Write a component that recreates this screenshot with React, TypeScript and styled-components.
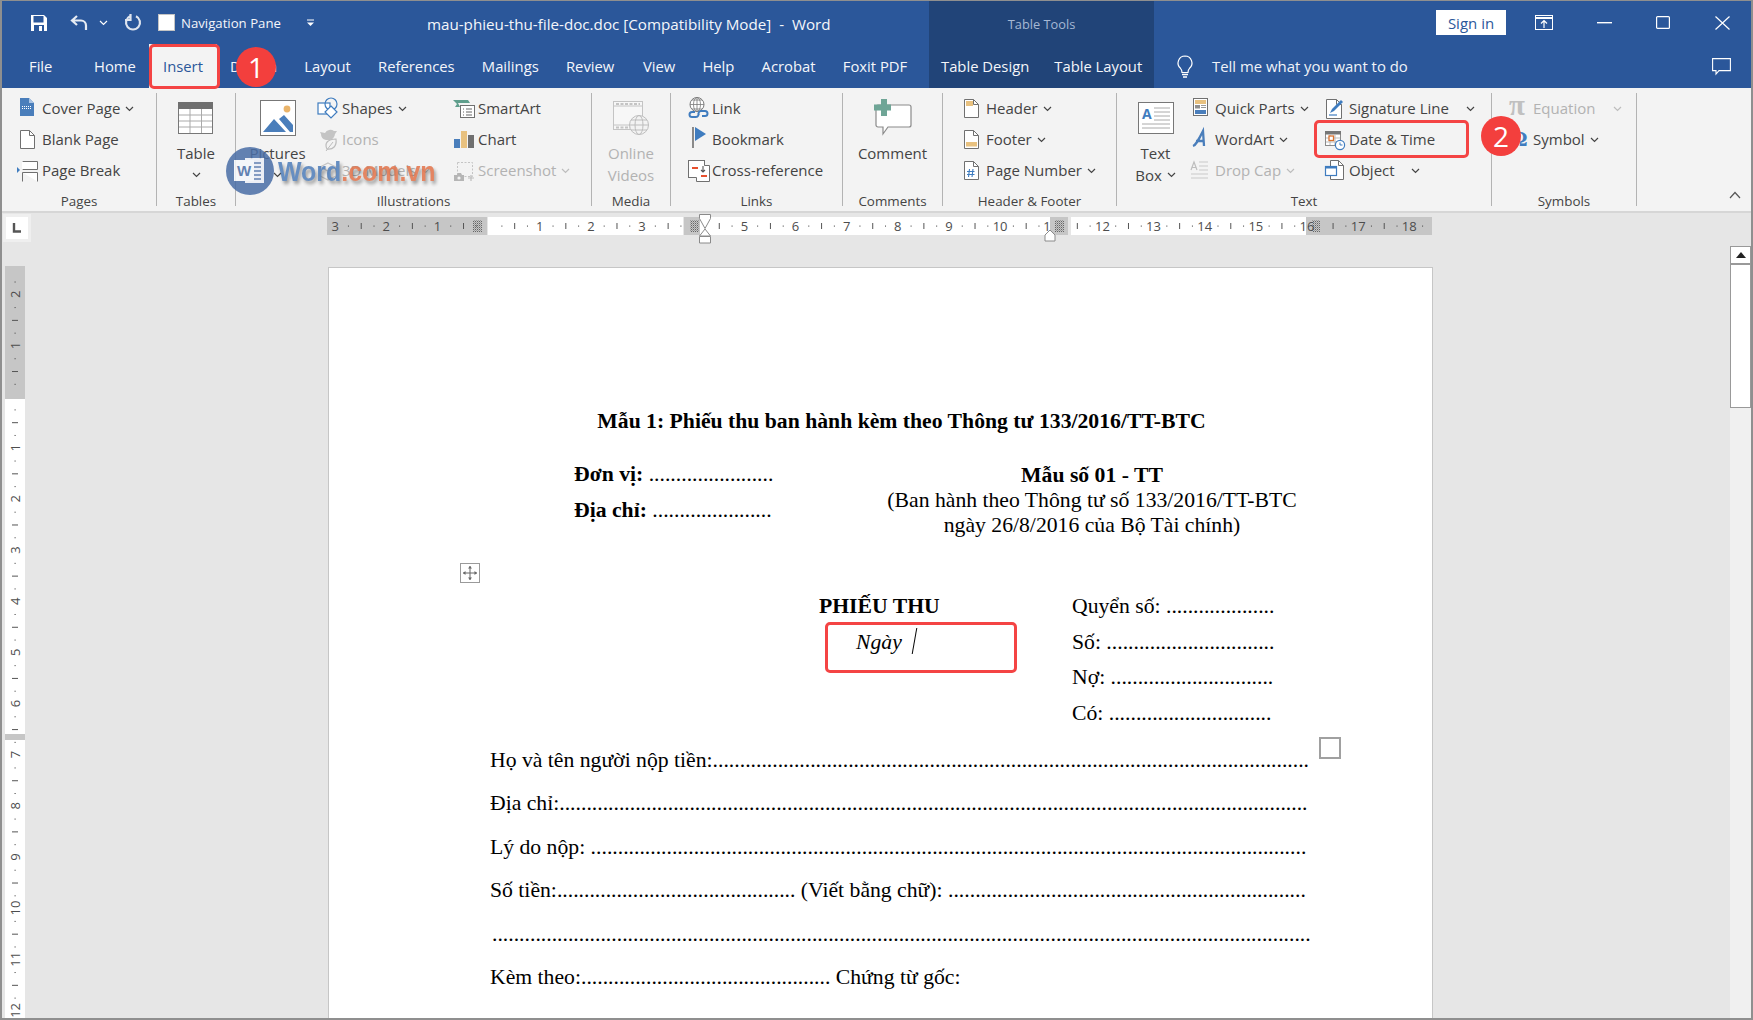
import React from 'react'
import styled, { createGlobalStyle } from 'styled-components'

const GlobalStyle = createGlobalStyle`
  html, body { margin: 0; padding: 0; background: #e6e6e6; }
  body { font-family: "Open Sans", "Noto Sans", sans-serif; }
`

const Window = styled.div`
  position: relative;
  box-sizing: border-box;
  width: 1753px;
  height: 1020px;
  display: flex;
  flex-direction: column;
  overflow: hidden;
  background: #e6e6e6;
  border: solid #8f8f8f;
  border-width: 1px 2px 2px 2px;
`

/* ---------- title bar + tabs ---------- */

const Head = styled.header`
  display: flex;
  height: 87px;
  flex-shrink: 0;
  background: #2b579a;
  color: #f4f6fa;
`

const HeadBlock = styled.div<{ $w?: number; $dark?: boolean }>`
  display: flex;
  flex-direction: column;
  width: ${p => (p.$w ? `${p.$w}px` : 'auto')};
  flex: ${p => (p.$w ? '0 0 auto' : '1')};
  background: ${p => (p.$dark ? '#214478' : 'transparent')};
`

const TopRow = styled.div`
  display: flex;
  align-items: center;
  height: 43px;
`

const TabRow = styled.nav`
  display: flex;
  align-items: center;
  height: 44px;
`

const Spot = styled.span<{ $ml: number }>`
  display: inline-flex;
  align-items: center;
  flex-shrink: 0;
  margin-left: ${p => p.$ml}px;
`

const RightSpot = styled.span`
  display: inline-flex;
  margin: 0 20px 0 auto;
`

const RulerSlot = styled.div`
  margin: 24px 0 0 3px;
`

const NavCheck = styled.span<{ $ml: number }>`
  width: 15px;
  height: 15px;
  margin-left: ${p => p.$ml}px;
  background: #fff;
  box-shadow: 0 0 0 1px #c4c4c4;
  flex-shrink: 0;
`

const NavLabel = styled.span<{ $ml: number }>`
  margin-left: ${p => p.$ml}px;
  font-size: 13.2px;
  white-space: nowrap;
  padding-top: 1px;
`

const DocTitle = styled.span<{ $ml: number }>`
  margin-left: ${p => p.$ml}px;
  font-size: 15.2px;
  white-space: pre;
  padding-top: 2px;
`

const ContextTitle = styled.span`
  width: 100%;
  text-align: center;
  padding-top: 2px;
  font-size: 12.8px;
  color: #a6b8d4;
`

const Tab = styled.span<{ $active?: boolean; $pl?: number; $pr?: number }>`
  display: flex;
  align-items: center;
  height: 100%;
  padding: 0 ${p => p.$pr ?? 13.6}px 0 ${p => p.$pl ?? 13.6}px;
  font-size: 14.8px;
  white-space: nowrap;
  background: ${p => (p.$active ? '#f3f3f3' : 'transparent')};
  color: ${p => (p.$active ? '#2b579a' : 'inherit')};
`

const TellMe = styled.span`
  margin-left: 19px;
  font-size: 14.9px;
  color: #f0f3f8;
  white-space: nowrap;
`

const SignIn = styled.span`
  width: 70px;
  height: 25px;
  margin-left: 282px;
  display: flex;
  align-items: center;
  justify-content: center;
  background: #fff;
  color: #2b579a;
  font-size: 15px;
  flex-shrink: 0;
`

/* ---------- ribbon ---------- */

const Ribbon = styled.div`
  display: flex;
  flex-shrink: 0;
  height: 118px;
  padding-top: 5px;
  box-sizing: content-box;
  background: #f3f3f3;
  border-bottom: 2px solid #d6d6d6;
  color: #444;
  font-size: 15px;
`

const Group = styled.section<{ $w: number }>`
  width: ${p => p.$w}px;
  flex-shrink: 0;
  height: 113px;
  box-sizing: border-box;
  border-right: 1px solid #b3b3b3;
`

const GroupBody = styled.div<{ $pl?: number }>`
  display: flex;
  height: 93px;
  padding-left: ${p => p.$pl ?? 0}px;
`

const GroupLabel = styled.div`
  height: 20px;
  margin-top: 5px;
  line-height: 20px;
  text-align: center;
  font-size: 13.4px;
  white-space: nowrap;
`

const SmallColumn = styled.div<{ $w?: number }>`
  display: flex;
  flex-direction: column;
  width: ${p => (p.$w ? `${p.$w}px` : 'auto')};
  flex-shrink: 0;
`

const SmallRow = styled.div<{ $off?: boolean }>`
  display: flex;
  align-items: center;
  height: 31px;
  white-space: nowrap;
  color: ${p => (p.$off ? '#b2b2b2' : '#444')};
`

const SmallText = styled.span`
  margin-left: 1px;
  padding-bottom: 2px;
`

const Large = styled.div<{ $w: number; $off?: boolean }>`
  display: flex;
  flex-direction: column;
  align-items: center;
  width: ${p => p.$w}px;
  flex-shrink: 0;
  color: ${p => (p.$off ? '#b2b2b2' : '#444')};
`

const LargeIcon = styled.div`
  display: flex;
  align-items: center;
  justify-content: center;
  height: 49px;
`

const LargeLine = styled.div`
  display: flex;
  align-items: center;
  height: 22px;
  white-space: nowrap;
`

const CollapseSpot = styled.span`
  margin: 0 10px 12px auto;
  align-self: flex-end;
`

/* ---------- work area ---------- */

const Work = styled.main`
  flex: 1;
  min-height: 0;
  display: flex;
`

const Rail = styled.div`
  width: 30px;
  flex-shrink: 0;
  display: flex;
  flex-direction: column;
`

const Corner = styled.div`
  width: 22px;
  height: 22px;
  margin: 1px 0 0 1px;
  border: 3px solid #efefef;
  background: #fff;
  display: flex;
  align-items: center;
  justify-content: center;
  flex-shrink: 0;
`

const Center = styled.div`
  flex: 1;
  min-width: 0;
  display: flex;
  flex-direction: column;
  overflow: hidden;
`

const Page = styled.article`
  margin: 23px 0 0 296px;
  width: 1105px;
  flex: 1;
  box-sizing: border-box;
  border: solid #c6c6c6;
  border-width: 1px 1px 0 1px;
  background: #fff;
  padding: 140px 0 0 161px;
  color: #000;
  font-family: "Liberation Serif", "Times New Roman", serif;
  font-size: 21.7px;
`

const Sheet = styled.div`
  position: relative;
  width: 819px;
`

const PageTitle = styled.h1`
  margin: 0;
  padding-left: 4px;
  font-size: 21.7px;
  line-height: 26px;
  font-weight: 700;
  text-align: center;
`

const Intro = styled.div`
  display: grid;
  grid-template-columns: 385px 434px;
  margin-top: 29px;
`

const IntroLeft = styled.div`
  padding-left: 84px;
  line-height: 35.6px;
  margin-top: -6px;
`

const IntroRight = styled.div`
  text-align: center;
  line-height: 25px;
`

const Strong = styled.b`
  font-weight: 700;
`

const Receipt = styled.div`
  display: grid;
  grid-template-columns: 329px 253px 237px;
  margin-top: 51px;
  line-height: 35.7px;
`

const ReceiptDate = styled.div`
  padding-left: 37px;
  font-style: italic;
`

const Caret = styled.span`
  display: inline-block;
  width: 1px;
  height: 26px;
  margin-left: 12px;
  background: #000;
  transform: skewX(-10deg);
  vertical-align: -5px;
`

const Form = styled.div`
  margin-top: 7px;
`

const FormRow = styled.div<{ $pl?: number }>`
  height: 43.5px;
  line-height: 43.5px;
  padding-left: ${p => p.$pl ?? 0}px;
  white-space: nowrap;
`

const MoveHandle = styled.span`
  position: absolute;
  left: -30px;
  top: 155px;
  width: 18px;
  height: 18px;
  border: 1px solid #9a9a9a;
  background: #fff;
  display: flex;
  align-items: center;
  justify-content: center;
`

const FloatBox = styled.span`
  position: absolute;
  left: 829px;
  top: 329px;
  width: 18px;
  height: 18px;
  border: 2px solid #a0a0a0;
`

const ScrollColumn = styled.div`
  width: 21px;
  flex-shrink: 0;
  display: flex;
  flex-direction: column;
  padding-top: 33px;
`

const ScrollUp = styled.div`
  height: 16px;
  border: 1px solid #999;
  border-bottom: 2px solid #999;
  background: #fff;
  display: flex;
  align-items: center;
  justify-content: center;
  flex-shrink: 0;
`

const ScrollThumb = styled.div`
  height: 142px;
  border: 1px solid #999;
  border-top: 0;
  background: #fff;
  flex-shrink: 0;
`

const ScrollTrack = styled.div`
  flex: 1;
  background: #f0f0f0;
`

/* ---------- overlays ---------- */

const RedBox = styled.span<{ $x: number; $y: number; $w: number; $h: number }>`
  position: absolute;
  left: ${p => p.$x}px;
  top: ${p => p.$y}px;
  width: ${p => p.$w}px;
  height: ${p => p.$h}px;
  box-sizing: border-box;
  border: 3px solid #f44444;
  border-radius: 5px;
`

const Badge = styled.span<{ $x: number; $y: number }>`
  position: absolute;
  left: ${p => p.$x - 20}px;
  top: ${p => p.$y - 20}px;
  width: 40px;
  height: 40px;
  border-radius: 50%;
  background: #f33f3d;
  color: #fff;
  display: flex;
  align-items: center;
  justify-content: center;
  font-family: "Open Sans", sans-serif;
  font-size: 28px;
`

const Watermark = styled.div`
  position: absolute;
  left: 222px;
  top: 144px;
  display: flex;
  align-items: center;
  opacity: 0.86;
  pointer-events: none;
`

const WatermarkText = styled.span`
  margin-left: 2px;
  font-family: "Liberation Sans", Arial, sans-serif;
  font-weight: 700;
  font-size: 28.5px;
  color: #4f7db9;
  transform: scaleX(0.875);
  transform-origin: left center;
  text-shadow: 2px 3px 4px rgba(0, 0, 0, 0.45);
`

const WatermarkAccent = styled.span`
  color: #e1734a;
`

/* ---------- icons ---------- */

const Ico = styled.svg`
  display: block;
  flex-shrink: 0;
  overflow: visible;
`

const I = ({ w = 24, h = 24, children }: { w?: number; h?: number; children: React.ReactNode }) => (
  <Ico width={w} height={h} viewBox={`0 0 ${w} ${h}`}>{children}</Ico>
)

const Chevron = ({ gap = 5, color = '#444' }: { gap?: number; color?: string }) => (
  <Spot $ml={gap}>
    <Ico width="9" height="6" viewBox="0 0 9 6">
      <path d="M1 1l3.5 3.5L8 1" fill="none" stroke={color} strokeWidth="1.2" />
    </Ico>
  </Spot>
)

const DocPath = ({ x = 3, y = 2, w = 14, h = 18, fill = '#fff', stroke = '#707070' }) => (
  <g fill={fill} stroke={stroke}>
    <path d={`M${x + 0.5} ${y + 0.5}h${w - 5}l5 5v${h - 5}h-${w}z`} />
    <path d={`M${x + w - 4.5} ${y + 0.5}v5h5`} fill="none" />
  </g>
)

const CoverIcon = () => (
  <I>
    <path d="M3 1h9l5 5v13H3z" fill="#4a7ebb" />
    <path d="M12 1v5h5z" fill="#a9c4e4" />
    <path d="M5 9.5h10M5 11.5h10" stroke="#fff" strokeDasharray="1 1" />
  </I>
)
const BlankIcon = () => <I><DocPath /></I>
const BreakIcon = () => (
  <I>
    <path d="M5.5 2.5h15v8h-15zM5.5 13.5h15v9M5.5 13.5v9" fill="#fff" stroke="#707070" />
    <path d="M5.5 2.5v8" stroke="#fff" />
    <path d="M0 8l3 3-3 3z" fill="#3f7cbf" />
  </I>
)
const ShapesIcon = () => (
  <I>
    <rect x="1" y="6" width="12" height="11" fill="#fff" stroke="#3f7cbf" strokeWidth="1.2" />
    <circle cx="14" cy="7" r="6" fill="none" stroke="#3f7cbf" strokeWidth="1.2" />
    <path d="M14 9l6 6-6 6-6-6z" fill="#fff" stroke="#3f7cbf" strokeWidth="1.2" />
  </I>
)
const SmartArtIcon = () => (
  <I>
    <path d="M0 3h15l2 3H5l2 4H2l2-3z" fill="#5f9e8c" />
    <rect x="7.5" y="8.5" width="14" height="12" fill="#fff" stroke="#707070" />
    <path d="M10 12h1M13 12h6M10 15h1M13 15h6M10 18h1M13 18h6" stroke="#666" />
  </I>
)
const LeafIcon = () => (
  <I>
    <path d="M3 4l5 1a6 6 0 0 1 9-2l3 0-2 3a7 7 0 0 1-5 6H9a6 6 0 0 1-5-6z" fill="#c4c4c4" />
    <path d="M10 21c-3-6 1-10 9-10 1 7-3 11-9 10z" fill="#f3f3f3" stroke="#bdbdbd" strokeWidth="1.2" />
    <path d="M9 23l7-9" stroke="#bdbdbd" />
  </I>
)
const ChartIcon = () => (
  <I>
    <rect x="1" y="11" width="6" height="9" fill="#4a7ebb" />
    <rect x="8" y="3" width="6" height="17" fill="#e8c17f" />
    <rect x="15" y="7" width="6" height="13" fill="#6f6f6f" />
  </I>
)
const CubeIcon = () => (
  <I>
    <path d="M11 4l8 4v9l-8 4-8-4V8zM3 8l8 4 8-4M11 12v9" fill="none" stroke="#c4c4c4" strokeWidth="1.2" />
  </I>
)
const ScreenshotIcon = () => (
  <I>
    <rect x="4.5" y="3.5" width="15" height="14" fill="none" stroke="#c4c4c4" strokeDasharray="2 1.5" />
    <path d="M1 16h3l1-2h3l1 2h2v6H1z" fill="#b5b5b5" />
    <circle cx="6" cy="19" r="1.6" fill="#f3f3f3" />
    <path d="M15 19h6M18 16v6" stroke="#bdbdbd" strokeWidth="1.2" />
  </I>
)
const LinkIcon = () => (
  <I>
    <circle cx="10" cy="7.5" r="7" fill="#fff" stroke="#7a7a7a" />
    <path d="M3 7.5h14M10 .5v14M5 3h10M5 12h10" stroke="#7a7a7a" strokeWidth=".8" />
    <ellipse cx="10" cy="7.5" rx="3.5" ry="7" fill="none" stroke="#7a7a7a" strokeWidth=".8" />
    <path d="M8 15h-3a2.5 2.5 0 0 0 0 5h4a2.5 2.5 0 0 0 2-4M12 18h0a2.5 2.5 0 0 1 2-4h4a2.5 2.5 0 0 1 0 5h-3" fill="none" stroke="#3f7cbf" strokeWidth="2" />
  </I>
)
const BookmarkIcon = () => (
  <I>
    <path d="M6 -1v21" stroke="#6f6f6f" strokeWidth="1.6" />
    <path d="M8 -1l11 7-11 7z" fill="#3f7cbf" />
  </I>
)
const CrossRefIcon = () => (
  <I>
    <rect x="1.5" y="1.5" width="16" height="17" fill="#fff" stroke="#707070" />
    <path d="M17.5 6.5h5v16h-13v-4" fill="#fff" stroke="#707070" />
    <path d="M5 9h6" stroke="#e8502e" strokeWidth="2" />
    <path d="M14 17h6" stroke="#e8502e" strokeWidth="2" />
    <path d="M16 7v6m-2-2l2 2 2-2M13 6" fill="none" stroke="#555" strokeWidth="1.1" />
  </I>
)
const HeaderIcon = () => (
  <I>
    <DocPath />
    <rect x="5" y="4" width="7" height="5" fill="#e8c17f" />
  </I>
)
const FooterIcon = () => (
  <I>
    <DocPath />
    <rect x="5" y="14" width="11" height="4.5" fill="#e8c17f" />
  </I>
)
const PageNumberIcon = () => (
  <I>
    <DocPath />
    <path d="M8.5 10l-1 8M12 10l-1 8M6 12.5h7.5M6 15.5h7.5" stroke="#3f7cbf" strokeWidth="1.1" />
  </I>
)
const QuickPartsIcon = () => (
  <I>
    <rect x="3.5" y="1.5" width="14" height="17" fill="#fff" stroke="#707070" />
    <rect x="5" y="3" width="11" height="4" fill="#e8c17f" />
    <rect x="5" y="8" width="5" height="3.5" fill="#8f8f8f" />
    <path d="M11 8.5h5M11 10.5h5" stroke="#999" />
    <rect x="5" y="13" width="11" height="4" fill="#4a7ebb" />
  </I>
)
const WordArtIcon = () => (
  <I>
    <path d="M3 18c3-1 5-5 10-15l1 15M6 13h8" fill="none" stroke="#4a7ebb" strokeWidth="2.3" />
  </I>
)
const DropCapIcon = () => (
  <I>
    <path d="M1 11l3-8 3 8M2 8.5h4" fill="none" stroke="#bdbdbd" strokeWidth="1.2" />
    <path d="M9 3h9M9 7h9M9 11h9M1 15h17M1 19h17" stroke="#c9c9c9" />
  </I>
)
const SignatureIcon = () => (
  <I>
    <DocPath x={2} y={2} w={15} h={19} />
    <path d="M6 16l2-4 9-9 2 2-9 9z" fill="#3f7cbf" />
    <path d="M5 18h8" stroke="#3f7cbf" strokeWidth="1.2" />
  </I>
)
const DateIcon = () => (
  <I>
    <rect x="1.5" y="3.5" width="15" height="14" fill="#fff" stroke="#8a8a8a" />
    <rect x="1" y="3" width="16" height="3.5" fill="#767676" />
    <path d="M6 7v10M11 7v10M2 10h14M2 14h14" stroke="#bbb" />
    <rect x="5" y="8" width="4.5" height="4.5" fill="#fff" stroke="#d9702d" strokeWidth="1.3" />
    <circle cx="16" cy="17" r="4.6" fill="#fff" stroke="#3f7cbf" strokeWidth="1.2" />
    <path d="M16 14.5V17h2.5" fill="none" stroke="#3f7cbf" />
  </I>
)
const ObjectIcon = () => (
  <I>
    <DocPath x={6} y={1} w={13} h={19} />
    <rect x="1.5" y="7.5" width="11" height="9" fill="#fff" stroke="#3f7cbf" strokeWidth="1.2" />
    <rect x="1.5" y="7.5" width="11" height="2" fill="#3f7cbf" />
  </I>
)
const GlyphText = styled.text<{ $c: string; $s: number }>`
  fill: ${p => p.$c};
  font-family: "Liberation Serif", serif;
  font-size: ${p => p.$s}px;
  font-weight: 700;
`
const PiIcon = () => <I><GlyphText x="1" y="18" $c="#c0c0c0" $s={29}>π</GlyphText></I>
const OmegaIcon = () => <I><GlyphText x="2" y="18" $c="#3f7cbf" $s={22}>Ω</GlyphText></I>

const TableIcon = () => (
  <I w={36} h={32}>
    <rect x=".5" y="6.5" width="34" height="25" fill="#fff" stroke="#777" />
    <rect x="0" y="0" width="35" height="7" fill="#6f6f6f" />
    <path d="M12 7v24M23.5 7v24M1 13h33M1 19h33M1 25h33" stroke="#aaa" />
  </I>
)
const PicturesIcon = () => (
  <I w={36} h={36}>
    <rect x=".5" y=".5" width="35" height="35" fill="#fff" stroke="#777" />
    <circle cx="27" cy="9" r="3.4" fill="#eab46a" />
    <path d="M3 32l11-13 12 13zM19 19l5-4 9 10v7h-3z" fill="#4a7ebb" />
  </I>
)
const VideosIcon = () => (
  <I w={36} h={34}>
    <rect x=".5" y=".5" width="29" height="28" fill="#f7f7f7" stroke="#c4c4c4" />
    <path d="M1 5h28M1 24h28" stroke="#c4c4c4" />
    <path d="M3 3h24M3 26.5h14" stroke="#c4c4c4" strokeWidth="2" strokeDasharray="3 1.5" />
    <circle cx="26" cy="24" r="9.5" fill="#f3f3f3" stroke="#bdbdbd" />
    <ellipse cx="26" cy="24" rx="4" ry="9.5" fill="none" stroke="#bdbdbd" />
    <path d="M16.5 24h19M18 19h16M18 29h16" stroke="#bdbdbd" />
  </I>
)
const CommentIcon = () => (
  <I w={38} h={37}>
    <path d="M4 6h31a2 2 0 0 1 2 2v18a2 2 0 0 1-2 2H14l-5 7v-7H4a2 2 0 0 1-2-2V8a2 2 0 0 1 2-2z" fill="#fff" stroke="#8a8a8a" strokeWidth="1.2" />
    <rect x="7" y="0" width="6" height="17" fill="#6fa596" />
    <rect x="0" y="5.5" width="17" height="6" fill="#6fa596" />
  </I>
)
const TextBoxIcon = () => (
  <I w={36} h={32}>
    <rect x=".5" y=".5" width="35" height="31" fill="#fff" stroke="#777" />
    <text x="4" y="17" fill="#3f7cbf" fontFamily="Open Sans" fontWeight="700" fontSize="14">A</text>
    <path d="M16 6h16M16 10h16M16 14h16M16 18h16M4 22h28M4 26h28" stroke="#aaa" />
  </I>
)

const SaveIcon = () => (
  <I w={16} h={16}>
    <path d="M0 0h13l3 3v13H0z" fill="#fff" />
    <rect x="2.5" y="1" width="10" height="6.5" fill="#2b579a" />
    <rect x="3" y="10" width="10" height="6" fill="#2b579a" />
    <rect x="8" y="11" width="3" height="5" fill="#fff" />
  </I>
)
const UndoIcon = () => (
  <I w={19} h={15}>
    <path d="M7 1L2 5.5 7 10M2 5.5h9a5 5 0 0 1 5 5V15" fill="none" stroke="#e6ebf3" strokeWidth="2.2" />
  </I>
)
const RedoIcon = () => (
  <I w={17} h={17}>
    <path d="M11 2.2a7 7 0 1 1-6 0M5.5 0v6H0" fill="none" stroke="#dfe5ef" strokeWidth="2.2" />
  </I>
)
const CustomizeIcon = () => (
  <I w={9} h={8}>
    <path d="M1 1h7" stroke="#fff" />
    <path d="M1 3.5h7L4.5 7z" fill="#fff" />
  </I>
)
const RibbonOptionsIcon = () => (
  <I w={18} h={15}>
    <rect x=".5" y=".5" width="17" height="14" fill="none" stroke="#fff" />
    <path d="M1 3h16" stroke="#fff" strokeWidth="2" />
    <path d="M9 13V6M6 8.5L9 5.5l3 3" fill="none" stroke="#fff" strokeWidth="1.2" />
  </I>
)
const MinimizeIcon = () => <I w={15} h={2}><rect width="15" height="1.4" fill="#fff" /></I>
const MaximizeIcon = () => <I w={14} h={13}><rect x=".6" y=".6" width="12.8" height="11.8" rx="1" fill="none" stroke="#fff" strokeWidth="1.2" /></I>
const CloseIcon = () => <I w={15} h={14}><path d="M.5.5l14 13M14.5.5l-14 13" stroke="#fff" strokeWidth="1.2" /></I>
const BulbIcon = () => (
  <I w={16} h={23}>
    <path d="M8 1a7 7 0 0 0-4.5 12.3c1.2 1.2 1.5 2.7 1.5 4.2h6c0-1.5.3-3 1.5-4.2A7 7 0 0 0 8 1z" fill="none" stroke="#fff" strokeWidth="1.2" />
    <path d="M5 19.5h6M6 22h4" stroke="#fff" strokeWidth="1.3" />
  </I>
)
const CommentsIcon = () => (
  <I w={19} h={17}>
    <path d="M.6.6h17.8v12H7l-3 3.5v-3.5H.6z" fill="none" stroke="#fff" strokeWidth="1.1" />
  </I>
)
const CollapseIcon = () => (
  <I w={12} h={8}><path d="M1 7l5-5.5L11 7" fill="none" stroke="#555" strokeWidth="1.2" /></I>
)
const MoveIcon = () => (
  <I w={14} h={14}>
    <path d="M7 0v14M0 7h14" stroke="#666" />
    <path d="M5 2.5L7 0l2 2.5zM5 11.5L7 14l2-2.5zM2.5 5L0 7l2.5 2zM11.5 5L14 7l-2.5 2z" fill="#666" />
  </I>
)
const WatermarkLogo = () => (
  <I w={52} h={52}>
    <circle cx="26" cy="26" r="24" fill="#4a6ea6" />
    <rect x="21" y="13" width="19" height="25" fill="#e9edf5" />
    <path d="M24 18h13M24 22h13M24 26h13M24 30h13M24 34h13" stroke="#4a6ea6" strokeWidth="1.3" />
    <rect x="10" y="15" width="20" height="21" fill="#f4f6fa" />
    <text x="20" y="31" textAnchor="middle" fontFamily="Liberation Sans" fontWeight="700" fontSize="15" fill="#4a6ea6">W</text>
  </I>
)

/* ---------- rulers ---------- */

const RulerDigit = styled.text`
  font-family: "Open Sans", sans-serif;
  font-size: 13px;
  fill: #4d4d4d;
  text-anchor: middle;
  dominant-baseline: central;
`

const RulerMark = styled.path`
  fill: #fff;
  stroke: #8a8a8a;
`

const Bar = styled.rect<{ $grey?: boolean }>`
  fill: ${p => (p.$grey ? '#c6c6c6' : '#fff')};
`

const UNIT = 51.15

const HorizontalRuler = () => {
  const zero = 161.6
  const hidden = [4, 11]
  const labels: number[] = []
  for (let k = -3; k <= 18; k++) if (k !== 0 && !hidden.includes(k)) labels.push(k)
  const ticks: React.ReactNode[] = []
  for (let k = -4; k <= 18; k++) {
    ;[0.25, 0.5, 0.75].forEach(f => {
      const x = zero + (k + f) * UNIT
      if (x < 4 || x > 1100) return
      if (Math.abs(x - 372) < 12 || Math.abs(x - 730) < 12 || Math.abs(x - 985) < 8 || (x > 140 && x < 162)) {
        if (!(x > 140 && x < 150)) return
      }
      ticks.push(
        <rect key={`${k}${f}`} x={x} y={f === 0.5 ? 10 : 12.5} width="1" height={f === 0.5 ? 6 : 1.2} fill="#555" />
      )
    })
  }
  return (
    <Ico width="1106" height="31" viewBox="0 0 1106 31">
      <defs>
        <pattern id="grip" width="2" height="2" patternUnits="userSpaceOnUse">
          <rect width="1" height="1" fill="#666" />
          <rect x="1" y="1" width="1" height="1" fill="#9a9a9a" />
        </pattern>
      </defs>
      <Bar $grey x="0" y="4" width="160" height="18" />
      <Bar x="161" y="4" width="195" height="18" />
      <Bar $grey x="357" y="4" width="16" height="18" />
      <Bar x="373" y="4" width="350" height="18" />
      <Bar $grey x="723" y="4" width="18" height="18" />
      <Bar x="744" y="4" width="235" height="18" />
      <Bar $grey x="979" y="4" width="126" height="18" />
      <rect x="146" y="7" width="9" height="12" fill="url(#grip)" />
      <rect x="363" y="7" width="9" height="12" fill="url(#grip)" />
      <rect x="728" y="7" width="9" height="12" fill="url(#grip)" />
      <rect x="985" y="7" width="8" height="12" fill="url(#grip)" />
      {ticks}
      {labels.map(k => (
        <RulerDigit key={k} x={zero + k * UNIT} y="13">{Math.abs(k)}</RulerDigit>
      ))}
      <RulerDigit x={720} y="13">1</RulerDigit>
      <RulerMark d="M372.5 1.5h11v4l-5.5 10-5.5-10z" />
      <RulerMark d="M378 16l5.5 7h-11z" />
      <RulerMark d="M372.5 23.5h11v6.5h-11z" />
      <RulerMark d="M723 17l5 5v6h-10v-6z" />
    </Ico>
  )
}

const VerticalRuler = () => {
  const zero = 130.6
  const labels = [-2, -1, 1, 2, 3, 4, 5, 6, 7, 8, 9, 10, 11, 12]
  const ticks: React.ReactNode[] = []
  for (let k = -3; k <= 12; k++) {
    ;[0.25, 0.5, 0.75].forEach(f => {
      const y = zero + (k + f) * UNIT
      if (y < 3 || y > 752) return
      ticks.push(
        <rect key={`${k}${f}`} x={f === 0.5 ? 7 : 9.5} y={y} width={f === 0.5 ? 6 : 1.2} height="1" fill="#555" />
      )
    })
  }
  return (
    <Ico width="20" height="756" viewBox="0 0 20 756">
      <Bar x="0" y="0" width="20" height="756" />
      <Bar $grey x="0" y="0" width="20" height="133" />
      <Bar $grey x="0" y="468" width="20" height="6" />
      {ticks}
      {labels.map(k => {
        const y = zero + k * UNIT
        return (
          <RulerDigit key={k} x="10" y={y} transform={`rotate(-90 10 ${y})`}>{Math.abs(k)}</RulerDigit>
        )
      })}
    </Ico>
  )
}

/* ---------- ribbon data helpers ---------- */

const Small = ({ icon, label, off, chevron, gap }: {
  icon: React.ReactNode; label: string; off?: boolean; chevron?: boolean; gap?: number
}) => (
  <SmallRow $off={off}>
    {icon}
    <SmallText>{label}</SmallText>
    {chevron && <Chevron gap={gap} color={off ? '#bdbdbd' : '#444'} />}
  </SmallRow>
)

const dots = (n: number) => '.'.repeat(n)

export default function App() {
  return (
    <>
      <GlobalStyle />
      <Window>
        <Head>
          <HeadBlock $w={927}>
            <TopRow>
              <Spot $ml={29}><SaveIcon /></Spot>
              <Spot $ml={23}><UndoIcon /></Spot>
              <Spot $ml={10}>
                <Ico width="9" height="6" viewBox="0 0 9 6"><path d="M1 1l3.5 3.5L8 1" fill="none" stroke="#fff" strokeWidth="1.2" /></Ico>
              </Spot>
              <Spot $ml={17}><RedoIcon /></Spot>
              <NavCheck $ml={17} />
              <NavLabel $ml={7}>Navigation Pane</NavLabel>
              <Spot $ml={25}><CustomizeIcon /></Spot>
              <DocTitle $ml={112}>mau-phieu-thu-file-doc.doc [Compatibility Mode]  -  Word</DocTitle>
            </TopRow>
            <TabRow>
              <Tab $pl={27} $pr={28}>File</Tab>
              <Tab>Home</Tab>
              <Tab $active>Insert</Tab>
              <Tab>Design</Tab>
              <Tab>Layout</Tab>
              <Tab>References</Tab>
              <Tab>Mailings</Tab>
              <Tab>Review</Tab>
              <Tab $pl={15}>View</Tab>
              <Tab>Help</Tab>
              <Tab>Acrobat</Tab>
              <Tab>Foxit PDF</Tab>
            </TabRow>
          </HeadBlock>
          <HeadBlock $w={225} $dark>
            <TopRow><ContextTitle>Table Tools</ContextTitle></TopRow>
            <TabRow>
              <Tab $pl={12} $pr={12.5}>Table Design</Tab>
              <Tab $pl={12.5}>Table Layout</Tab>
            </TabRow>
          </HeadBlock>
          <HeadBlock>
            <TopRow>
              <SignIn>Sign in</SignIn>
              <Spot $ml={29}><RibbonOptionsIcon /></Spot>
              <Spot $ml={44}><MinimizeIcon /></Spot>
              <Spot $ml={44}><MaximizeIcon /></Spot>
              <Spot $ml={45}><CloseIcon /></Spot>
            </TopRow>
            <TabRow>
              <Spot $ml={23}><BulbIcon /></Spot>
              <TellMe>Tell me what you want to do</TellMe>
              <RightSpot><CommentsIcon /></RightSpot>
            </TabRow>
          </HeadBlock>
        </Head>

        <Ribbon>
          <Group $w={155}>
            <GroupBody $pl={15}>
              <SmallColumn>
                <Small icon={<CoverIcon />} label="Cover Page" chevron />
                <Small icon={<BlankIcon />} label="Blank Page" />
                <Small icon={<BreakIcon />} label="Page Break" />
              </SmallColumn>
            </GroupBody>
            <GroupLabel>Pages</GroupLabel>
          </Group>
          <Group $w={79}>
            <GroupBody>
              <Large $w={78}>
                <LargeIcon><TableIcon /></LargeIcon>
                <LargeLine>Table</LargeLine>
                <LargeLine><Chevron gap={0} /></LargeLine>
              </Large>
            </GroupBody>
            <GroupLabel>Tables</GroupLabel>
          </Group>
          <Group $w={356}>
            <GroupBody $pl={2}>
              <Large $w={79}>
                <LargeIcon><PicturesIcon /></LargeIcon>
                <LargeLine>Pictures</LargeLine>
                <LargeLine><Chevron gap={0} /></LargeLine>
              </Large>
              <SmallColumn $w={136}>
                <Small icon={<ShapesIcon />} label="Shapes" chevron />
                <Small icon={<LeafIcon />} label="Icons" off />
                <Small icon={<CubeIcon />} label="3D Models" off chevron />
              </SmallColumn>
              <SmallColumn>
                <Small icon={<SmartArtIcon />} label="SmartArt" />
                <Small icon={<ChartIcon />} label="Chart" />
                <Small icon={<ScreenshotIcon />} label="Screenshot" off chevron />
              </SmallColumn>
            </GroupBody>
            <GroupLabel>Illustrations</GroupLabel>
          </Group>
          <Group $w={79}>
            <GroupBody>
              <Large $w={78} $off>
                <LargeIcon><VideosIcon /></LargeIcon>
                <LargeLine>Online</LargeLine>
                <LargeLine>Videos</LargeLine>
              </Large>
            </GroupBody>
            <GroupLabel>Media</GroupLabel>
          </Group>
          <Group $w={172}>
            <GroupBody $pl={16}>
              <SmallColumn>
                <Small icon={<LinkIcon />} label="Link" />
                <Small icon={<BookmarkIcon />} label="Bookmark" />
                <Small icon={<CrossRefIcon />} label="Cross-reference" />
              </SmallColumn>
            </GroupBody>
            <GroupLabel>Links</GroupLabel>
          </Group>
          <Group $w={100}>
            <GroupBody>
              <Large $w={99}>
                <LargeIcon><CommentIcon /></LargeIcon>
                <LargeLine>Comment</LargeLine>
              </Large>
            </GroupBody>
            <GroupLabel>Comments</GroupLabel>
          </Group>
          <Group $w={174}>
            <GroupBody $pl={18}>
              <SmallColumn>
                <Small icon={<HeaderIcon />} label="Header" chevron />
                <Small icon={<FooterIcon />} label="Footer" chevron />
                <Small icon={<PageNumberIcon />} label="Page Number" chevron />
              </SmallColumn>
            </GroupBody>
            <GroupLabel>Header &amp; Footer</GroupLabel>
          </Group>
          <Group $w={375}>
            <GroupBody $pl={4}>
              <Large $w={69}>
                <LargeIcon><TextBoxIcon /></LargeIcon>
                <LargeLine>Text</LargeLine>
                <LargeLine>Box<Chevron gap={5} /></LargeLine>
              </Large>
              <SmallColumn $w={134}>
                <Small icon={<QuickPartsIcon />} label="Quick Parts" chevron />
                <Small icon={<WordArtIcon />} label="WordArt" chevron />
                <Small icon={<DropCapIcon />} label="Drop Cap" off chevron />
              </SmallColumn>
              <SmallColumn>
                <Small icon={<SignatureIcon />} label="Signature Line" chevron gap={17} />
                <Small icon={<DateIcon />} label="Date & Time" />
                <Small icon={<ObjectIcon />} label="Object" chevron gap={16} />
              </SmallColumn>
            </GroupBody>
            <GroupLabel>Text</GroupLabel>
          </Group>
          <Group $w={145}>
            <GroupBody $pl={16}>
              <SmallColumn>
                <Small icon={<PiIcon />} label="Equation" off chevron gap={18} />
                <Small icon={<OmegaIcon />} label="Symbol" chevron />
              </SmallColumn>
            </GroupBody>
            <GroupLabel>Symbols</GroupLabel>
          </Group>
          <CollapseSpot><CollapseIcon /></CollapseSpot>
        </Ribbon>

        <Work>
          <Rail>
            <Corner>
              <Ico width="10" height="10" viewBox="0 0 10 10"><path d="M2 0v8.5h7" fill="none" stroke="#555" strokeWidth="2.4" /></Ico>
            </Corner>
            <RulerSlot><VerticalRuler /></RulerSlot>
          </Rail>
          <Center>
            <Spot $ml={295}><HorizontalRuler /></Spot>
            <Page>
              <Sheet>
                <PageTitle>Mẫu 1: Phiếu thu ban hành kèm theo Thông tư 133/2016/TT-BTC</PageTitle>
                <Intro>
                  <IntroLeft>
                    <div><Strong>Đơn vị:</Strong> {dots(23)}</div>
                    <div><Strong>Địa chỉ:</Strong> {dots(22)}</div>
                  </IntroLeft>
                  <IntroRight>
                    <div><Strong>Mẫu số 01 - TT</Strong></div>
                    <div>(Ban hành theo Thông tư số 133/2016/TT-BTC</div>
                    <div>ngày 26/8/2016 của Bộ Tài chính)</div>
                  </IntroRight>
                </Intro>
                <MoveHandle><MoveIcon /></MoveHandle>
                <Receipt>
                  <div />
                  <div>
                    <div><Strong>PHIẾU THU</Strong></div>
                    <ReceiptDate>Ngày<Caret /></ReceiptDate>
                  </div>
                  <div>
                    <div>Quyển số: {dots(20)}</div>
                    <div>Số: {dots(31)}</div>
                    <div>Nợ: {dots(30)}</div>
                    <div>Có: {dots(30)}</div>
                  </div>
                </Receipt>
                <FloatBox />
                <Form>
                  <FormRow>Họ và tên người nộp tiền:{dots(110)}</FormRow>
                  <FormRow>Địa chỉ:{dots(138)}</FormRow>
                  <FormRow>Lý do nộp: {dots(132)}</FormRow>
                  <FormRow>Số tiền:{dots(44)} (Viết bằng chữ): {dots(66)}</FormRow>
                  <FormRow $pl={2}>{dots(151)}</FormRow>
                  <FormRow>Kèm theo:{dots(46)} Chứng từ gốc:</FormRow>
                </Form>
              </Sheet>
            </Page>
          </Center>
          <ScrollColumn>
            <ScrollUp>
              <Ico width="10" height="6" viewBox="0 0 10 6"><path d="M5 0l5 6H0z" fill="#222" /></Ico>
            </ScrollUp>
            <ScrollThumb />
            <ScrollTrack />
          </ScrollColumn>
        </Work>

        <Watermark>
          <WatermarkLogo />
          <WatermarkText>Word<WatermarkAccent>.com.vn</WatermarkAccent></WatermarkText>
        </Watermark>
        <RedBox $x={147} $y={43} $w={71} $h={45} />
        <Badge $x={254} $y={66}>1</Badge>
        <RedBox $x={1312} $y={119} $w={155} $h={38} />
        <Badge $x={1499} $y={135}>2</Badge>
        <RedBox $x={823} $y={621} $w={192} $h={51} />
      </Window>
    </>
  )
}
